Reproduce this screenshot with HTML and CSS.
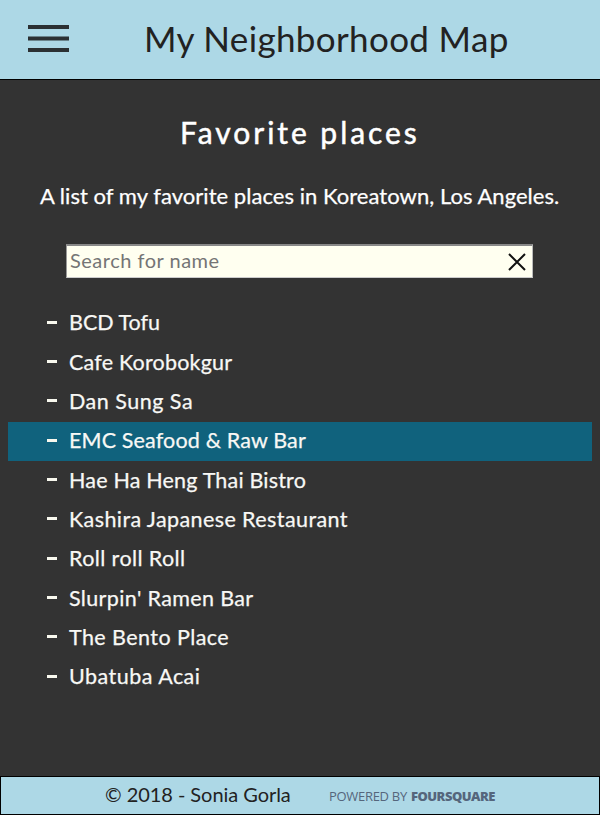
FILE: index.html
```html
<!DOCTYPE html>
<html lang="en">
<head>
<meta charset="utf-8">
<title>My Neighborhood Map</title>
<link rel="stylesheet" href="styles.css">
</head>
<body>
<header class="header">
  <svg class="menu" viewBox="0 0 41 28" role="img" aria-label="Menu"><path d="M0 2h41M0 13.5h41M0 25h41"/></svg>
  <h1 class="title">My Neighborhood Map</h1>
</header>
<main class="sidebar">
  <h2 class="heading">Favorite places</h2>
  <p class="intro">A list of my favorite places in Koreatown, Los Angeles.</p>
  <div class="search">
    <span class="placeholder">Search for name</span>
    <svg class="clear" viewBox="0 0 18 18" role="img" aria-label="Clear"><path d="M1 1l16 16M17 1L1 17"/></svg>
  </div>
  <ul class="places">
    <li class="place"><span class="name bcd">BCD Tofu</span></li>
    <li class="place"><span class="name cafe">Cafe Korobokgur</span></li>
    <li class="place"><span class="name dan">Dan Sung Sa</span></li>
    <li class="place active"><span class="name emc">EMC Seafood &amp; Raw Bar</span></li>
    <li class="place"><span class="name hae">Hae Ha Heng Thai Bistro</span></li>
    <li class="place"><span class="name kashira">Kashira Japanese Restaurant</span></li>
    <li class="place"><span class="name roll">Roll roll Roll</span></li>
    <li class="place"><span class="name slurpin">Slurpin' Ramen Bar</span></li>
    <li class="place"><span class="name bento">The Bento Place</span></li>
    <li class="place"><span class="name ubatuba">Ubatuba Acai</span></li>
  </ul>
</main>
<footer class="footer">
  <span class="copyright">© 2018 - Sonia Gorla</span>
  <span class="powered"><span class="by">POWERED BY</span><strong class="brand">FOURSQUARE</strong></span>
</footer>
</body>
</html>
```
FILE: styles.css
```css
* { box-sizing: border-box; }
body {
  margin: 0;
  height: 815px;
  display: flex;
  flex-direction: column;
  overflow: hidden;
  background: #333;
  color: #fff;
  font-family: Lato, "Open Sans", sans-serif;
  white-space: nowrap;
}
.header {
  height: 80px;
  flex: none;
  display: flex;
  align-items: center;
  padding-left: 28px;
  background: #add8e6;
  border-bottom: 1px solid #000;
}
.menu { width: 41px; height: 28px; margin-top: -2px; fill: none; stroke: #2b3033; stroke-width: 4; }
.title { margin: -3px 0 0 75px; font-size: 35px; line-height: 42px; font-weight: 400; letter-spacing: 0.35px; color: #222; }
.sidebar { flex: 1; display: flex; flex-direction: column; padding: 0 8px; }
.heading { margin: 34px 0 0 172px; font-size: 30px; line-height: 36px; font-weight: 400; letter-spacing: 2.95px; -webkit-text-stroke: 0.5px #fff; }
.intro { margin: 33px 0 0 32px; font-size: 22px; line-height: 26px; letter-spacing: 0.04px; -webkit-text-stroke: 0.25px #fff; }
.search {
  width: 467px;
  height: 34px;
  margin: 35px 0 0 58px;
  padding: 0 6px 0 2px;
  display: flex;
  align-items: center;
  justify-content: space-between;
  background: #fffff0;
  border: 2px solid;
  border-width: 2px 1px 1px;
  border-color: #888 #bbb #ccc #999;
}
.placeholder { margin-top: -3px; padding-left: 1px; font-size: 20px; line-height: 24px; color: #757575; letter-spacing: 0.5px; }
.clear { width: 18px; height: 18px; fill: none; stroke: #111; stroke-width: 2; }
.places { list-style: none; margin: 26px 0 0; padding: 0; }
.place { height: 39.35px; display: flex; align-items: center; padding-left: 39px; font-size: 21.5px; line-height: 26px; color: #f8f8f5; }
.place::before { content: ""; width: 10px; height: 3px; margin: -3px 12px 0 0; background: #f8f8ee; }
.active { background: #10627d; }
.name { margin-top: -3px; -webkit-text-stroke: 0.25px; }
.cafe { letter-spacing: 0.2px; }
.dan { letter-spacing: 0.5px; }
.emc { letter-spacing: 0.15px; }
.hae { letter-spacing: 0.19px; }
.kashira { letter-spacing: 0.41px; }
.roll { letter-spacing: 0.4px; }
.slurpin { letter-spacing: 0.36px; }
.bento { letter-spacing: 0.43px; }
.ubatuba { letter-spacing: 0.47px; }
.footer {
  height: 39px;
  flex: none;
  display: flex;
  align-items: center;
  padding-left: 104px;
  background: #add8e6;
  border: 1px solid #000;
  color: #222;
}
.copyright { width: 224px; margin-top: -3px; font-size: 20px; line-height: 24px; letter-spacing: -0.05px; }
.powered { display: flex; gap: 4px; font-size: 13px; line-height: 16px; color: #55667c; font-family: "Open Sans", sans-serif; }
.by { letter-spacing: -0.3px; }
.brand { font-weight: 800; letter-spacing: -0.5px; }
```
